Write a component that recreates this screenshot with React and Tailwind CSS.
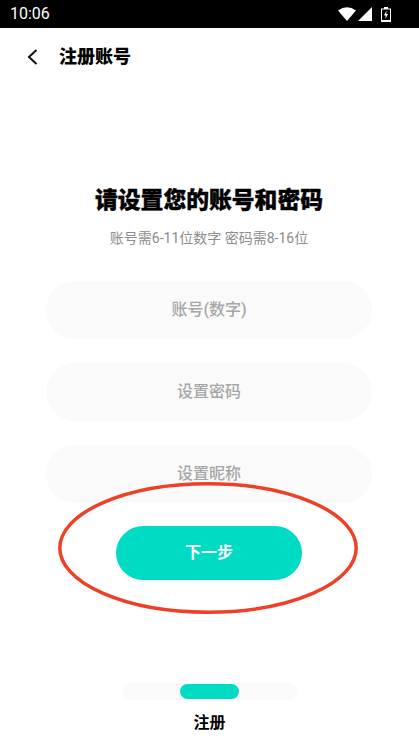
const font = { fontFamily: 'Roboto, "Noto Sans CJK SC", sans-serif' };

function Field({ label, cls }) {
  return (
    <div className={`flex h-[58px] w-[326px] items-center justify-center rounded-full bg-[#fafafa] pb-[1px] text-base font-medium text-[#a6a6a6] ${cls}`}>
      {label}
    </div>
  );
}

export default function App() {
  return (
    <div className="relative flex h-[745px] w-[419px] flex-col overflow-hidden bg-white" style={font}>
      <div className="flex h-[28px] shrink-0 items-center justify-between bg-black pl-[10px] pr-[28px]">
        <span className="text-base leading-none text-white">10:06</span>
        <div className="flex items-center">
          <svg width="18" height="14" viewBox="0 0 18 14" className="mr-[2px]"><path d="M0 3.5 Q9 -3 18 3.5 L9 14 Z" fill="#fff" /></svg>
          <svg width="14" height="14" viewBox="0 0 14 14" className="mr-[9px]"><path d="M14 0 V14 H0 Z" fill="#fff" /></svg>
          <svg width="10" height="15" viewBox="0 0 10 15"><path d="M3 0h4v1.5h3V15H0V1.5h3z" fill="#fff" /><path d="M1 2.5h8v11H1z" fill="#000" /><path d="M1 13h8v1H1z" fill="#fff" /><path d="M5.6 3.5 3 8.5h1.8L4.4 12 7 7H5.2z" fill="#fff" /></svg>
        </div>
      </div>
      <div className="flex h-[57px] shrink-0 items-center pl-[27px]">
        <svg width="11" height="16" viewBox="0 0 11 16" fill="none" stroke="#111" strokeWidth="2"><path d="M9.5 1 2 8l7.5 7" /></svg>
        <span className="ml-[21px] text-[18px] leading-none font-black text-black">注册账号</span>
      </div>
      <div className="mt-[100px] flex flex-col items-center pr-[1px]">
        <h1 className="text-[22.8px] leading-[31px] font-black text-black [-webkit-text-stroke:0.4px_black]">请设置您的账号和密码</h1>
        <p className="mt-[12px] text-sm leading-[20px] text-[#8c8c8c]">账号需6-11位数字 密码需8-16位</p>
        <Field label="账号(数字)" cls="mt-[33px]" />
        <Field label="设置密码" cls="mt-[24px]" />
        <Field label="设置昵称" cls="mt-[24px]" />
        <div className="mt-[23px] flex h-[54px] w-[186px] items-center justify-center rounded-full bg-[#00dbc3] pb-[1px] text-base font-bold text-white">下一步</div>
      </div>
      <div className="mt-auto mb-[11px] flex flex-col items-center">
        <div className="flex h-[17px] w-[175px] items-center justify-center rounded-full bg-[#fafafa]">
          <div className="h-[15px] w-[59px] rounded-full bg-[#00dbc3]" />
        </div>
        <span className="mt-[12px] text-base leading-[22px] font-bold text-black">注册</span>
      </div>
      <svg className="absolute top-[482px] left-[58px]" width="300" height="132" viewBox="0 0 300 132" fill="none">
        <ellipse cx="150" cy="66" rx="148.2" ry="64.2" stroke="#ee4026" strokeWidth="3.5" />
      </svg>
    </div>
  );
}
